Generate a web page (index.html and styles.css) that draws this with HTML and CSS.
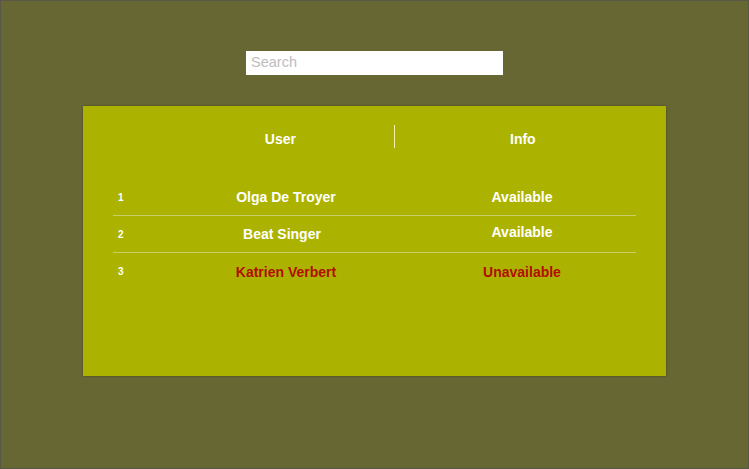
FILE: index.html
```html
<!DOCTYPE html>
<html>
<head>
<meta charset="utf-8">
<link rel="stylesheet" href="styles.css">
</head>
<body>
<div class="page">
  <div class="search-wrap">
    <input class="search" type="text" placeholder="Search">
  </div>
  <div class="panel">
    <div class="head">
      <div class="head-user">User</div>
      <div class="head-div"></div>
      <div class="head-info">Info</div>
    </div>
    <div class="rows">
      <div class="row">
        <div class="num">1</div>
        <div class="name">Olga De Troyer</div>
        <div class="info">Available</div>
      </div>
      <div class="row">
        <div class="num">2</div>
        <div class="name name-short">Beat Singer</div>
        <div class="info info-up">Available</div>
      </div>
      <div class="row row-last">
        <div class="num">3</div>
        <div class="name red">Katrien Verbert</div>
        <div class="info red">Unavailable</div>
      </div>
    </div>
  </div>
</div>
</body>
</html>
```
FILE: styles.css
```css
html, body {
  margin: 0;
  padding: 0;
}
body {
  background: #666633;
  font-family: "Liberation Sans", Arial, Helvetica, sans-serif;
}
.page {
  box-sizing: border-box;
  width: 749px;
  height: 469px;
  border: 1px solid #585846;
  background: #676734;
  overflow: hidden;
}
.search-wrap {
  padding-top: 50px;
  padding-left: 245px;
}
.search {
  display: block;
  box-sizing: border-box;
  width: 257px;
  height: 24px;
  border: none;
  outline: none;
  margin: 0;
  padding: 0 5px 2px 5px;
  font-family: "Liberation Sans", Arial, sans-serif;
  font-size: 14.5px;
  background: #fff;
}
.search::placeholder {
  color: #bdbdbd;
}
.panel {
  margin-top: 31px;
  margin-left: 82px;
  width: 583px;
  height: 270px;
  background: #abb300;
  box-shadow: 0 0 2px rgba(0, 0, 0, 0.35);
  color: #fff;
  font-weight: bold;
}
.head {
  display: grid;
  grid-template-columns: 311px 1px 271px;
  align-items: start;
  padding-top: 19px;
  height: 23px;
}
.head-user {
  text-align: right;
  padding-right: 98px;
  padding-top: 6px;
  line-height: 16px;
  font-size: 14px;
}
.head-div {
  height: 23px;
  background: #f4f0a8;
}
.head-info {
  text-align: left;
  padding-left: 115px;
  padding-top: 6px;
  line-height: 16px;
  font-size: 14px;
}
.rows {
  margin-top: 31px;
  margin-left: 30px;
  width: 523px;
}
.row {
  display: grid;
  grid-template-columns: 51px 244px 228px;
  height: 37px;
  align-items: center;
  border-bottom: 1px solid #c9cd6a;
  box-sizing: border-box;
}
.row-last {
  border-bottom: none;
}
.num {
  padding-left: 5px;
  font-size: 10px;
}
.name {
  text-align: center;
  font-size: 14px;
}
.name-short {
  padding-right: 8px;
}
.info {
  text-align: center;
  font-size: 14px;
}
.info-up {
  position: relative;
  top: -2px;
}
.red {
  color: #b10e00;
}
```
